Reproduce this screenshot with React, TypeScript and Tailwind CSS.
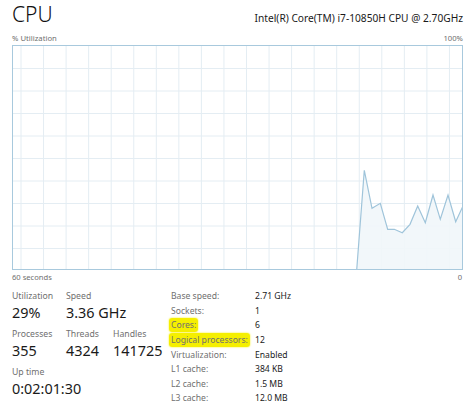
import React from 'react';

const font = { fontFamily: '"Noto Sans", "Open Sans", sans-serif' };

const pts: [number, number][] = [
  [0, 224], [343.7, 224], [351.3, 124.3], [359, 162.3], [367.3, 157.3], [374.7, 183.3],
  [381.3, 183.3], [389.3, 186.7], [397, 178.3], [404.7, 160], [412.3, 176.7], [420, 149],
  [427.3, 173.3], [435, 149], [442.7, 175.7], [450, 160],
];

function Graph() {
  const w = 451;
  const h = 225;
  const vlines = [];
  for (let x = 8; x < w; x += 22.55) vlines.push(x);
  const hlines = [];
  for (let y = 22.5; y < h; y += 22.5) hlines.push(y);
  const line = pts.map(([x, y]) => `${x},${y}`).join(' ');
  const area = `343.7,225 ${pts.slice(1).map(([x, y]) => `${x},${y}`).join(' ')} 450,225`;
  return (
    <div className="ml-[12px] mt-[1px] h-[225px] w-[451px] border border-[#a8c9dd] box-border">
      <svg width="100%" height="100%" viewBox="0 0 449 223" preserveAspectRatio="none" className="block">
        {vlines.map((x) => (
          <line key={`v${x}`} x1={x} y1={0} x2={x} y2={h} stroke="#e4edf3" strokeWidth={1} />
        ))}
        {hlines.map((y) => (
          <line key={`h${y}`} x1={0} y1={y} x2={w} y2={y} stroke="#e4edf3" strokeWidth={1} />
        ))}
        <polygon points={area} fill="#f1f6fa" fillOpacity={0.9} />
        <polyline points={line} fill="none" stroke="#9fc4da" strokeWidth={1.2} />
      </svg>
    </div>
  );
}

function Stat({ label, value, w }: { label: string; value: string; w: string }) {
  return (
    <div className={`${w} shrink-0 flex flex-col`}>
      <span className="text-[8.7px] leading-[14px] text-[#6f6f6f] whitespace-nowrap">{label}</span>
      <span className="text-[14.4px] leading-[20px] text-[#1a1a1a] whitespace-nowrap">{value}</span>
    </div>
  );
}

const specs = [
  ['Base speed:', '2.71 GHz'],
  ['Sockets:', '1'],
  ['Cores:', '6', 'hl'],
  ['Logical processors:', '12', 'hl'],
  ['Virtualization:', 'Enabled'],
  ['L1 cache:', '384 KB'],
  ['L2 cache:', '1.5 MB'],
  ['L3 cache:', '12.0 MB'],
];

export default function App() {
  return (
    <div className="w-[474px] h-[414px] bg-white overflow-hidden" style={font}>
      <div className="flex items-baseline justify-between px-[12px] h-[29px]">
        <span className="text-[21px] leading-[29px] font-light text-[#111]">CPU</span>
        <span className="text-[10.2px] text-[#1a1a1a] mr-[-1px]">
          Intel(R) Core(TM) i7-10850H CPU @ 2.70GHz
        </span>
      </div>
      <div className="flex justify-between px-[12px] pr-[11px] mt-[3px] h-[12px] text-[7.7px] leading-[12px] text-[#6f6f6f]">
        <span>% Utilization</span>
        <span>100%</span>
      </div>
      <Graph />
      <div className="flex justify-between px-[12px] pr-[12px] h-[15px] text-[7.6px] leading-[15px] text-[#6f6f6f]">
        <span>60 seconds</span>
        <span>0</span>
      </div>
      <div className="flex mt-[4px]">
        <div className="w-[171px] shrink-0 pl-[12px] flex flex-col gap-[4px]">
          <div className="flex">
            <Stat label="Utilization" value="29%" w="w-[54px]" />
            <Stat label="Speed" value="3.36 GHz" w="w-[80px]" />
          </div>
          <div className="flex">
            <Stat label="Processes" value="355" w="w-[54px]" />
            <Stat label="Threads" value="4324" w="w-[47px]" />
            <Stat label="Handles" value="141725" w="w-[50px]" />
          </div>
          <div className="flex">
            <Stat label="Up time" value="0:02:01:30" w="w-[100px]" />
          </div>
        </div>
        <div className="flex flex-col">
          {specs.map(([k, v, hl]) => (
            <div key={k} className="flex h-[14.6px] items-center text-[8.6px] leading-[12px] whitespace-nowrap">
              <span className="w-[84px] shrink-0 text-[#6f6f6f]">
                {hl ? (
                  <span className="bg-[#f5ef00] rounded-[3px] px-[2px] -mx-[2px] py-[1px] shadow-[0_0_2px_#f5ef00]">
                    {k}
                  </span>
                ) : (
                  k
                )}
              </span>
              <span className="text-[#1a1a1a]">{v}</span>
            </div>
          ))}
        </div>
      </div>
    </div>
  );
}
